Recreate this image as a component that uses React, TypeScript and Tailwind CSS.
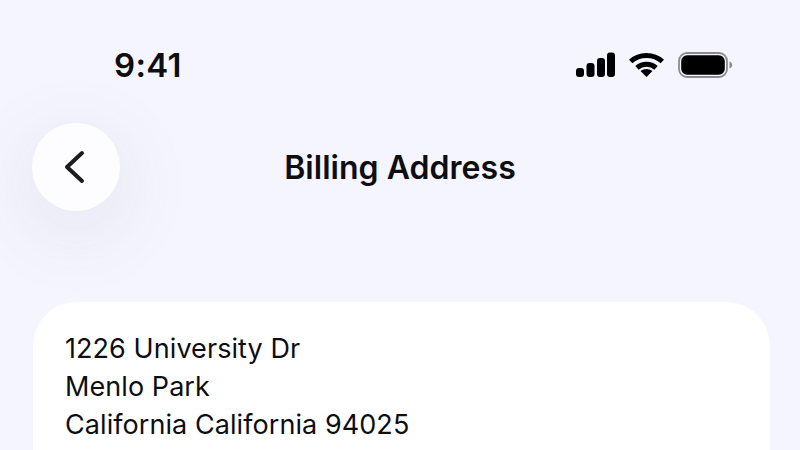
export default function App() {
  return (
    <div className="h-[450px] w-[800px] overflow-hidden bg-[#f5f5ff] font-['Inter',sans-serif] text-[#0e0e12]">
      {/* Status bar */}
      <div className="flex h-[123px] items-start justify-between pl-[114px] pr-[67px] pt-[45px]">
        <span className="text-[33px] leading-[40px] font-semibold tracking-[0.3px]">9:41</span>
        <div className="mt-[7px] flex items-center gap-[14px]">
          <svg width="39" height="26" viewBox="0 0 39 26" fill="#000">
            <rect x="0" y="16" width="8" height="9" rx="3" />
            <rect x="10.5" y="11" width="8" height="14" rx="3" />
            <rect x="21" y="6" width="8" height="19" rx="3" />
            <rect x="31" y="0.5" width="8" height="24.5" rx="3" />
          </svg>
          <svg width="35" height="26" viewBox="0 0 35 26" fill="none" stroke="#000" strokeWidth="5">
            <path d="M1.7 9.5C10.5 1.5 24.5 1.5 33.3 9.5" />
            <path d="M8 15.8C13.5 11 21.5 11 27 15.8" />
            <path d="M17.5 25l-6-6c3.4-2.8 8.6-2.8 12 0z" fill="#000" stroke="none" />
          </svg>
          <svg width="55" height="26" viewBox="0 0 55 26" fill="none">
            <rect x="1" y="1" width="48" height="24" rx="8" stroke="#8c8c90" strokeWidth="1.8" />
            <rect x="3.2" y="3.2" width="43.6" height="19.6" rx="6" fill="#000" />
            <path d="M51.5 9.5c1.8.6 2.8 2 2.8 3.5s-1 2.9-2.8 3.5z" fill="#8c8c90" />
          </svg>
        </div>
      </div>

      {/* Header */}
      <div className="relative flex h-[88px] items-center justify-center">
        <button className="absolute left-[32px] top-0 flex h-[88px] w-[88px] items-center justify-center rounded-full bg-[#fdfdff] shadow-[0_18px_60px_24px_rgba(70,70,90,0.05)]">
          <svg width="24" height="36" viewBox="0 0 24 36" fill="none" stroke="#1b1b20" strokeWidth="4" strokeLinecap="round" strokeLinejoin="round" className="-ml-[5px]">
            <path d="M20 4L5 18l15 14" />
          </svg>
        </button>
        <h1 className="mt-[2px] text-[32px] leading-[40px] font-semibold tracking-[0.03px]">Billing Address</h1>
      </div>

      {/* Address card */}
      <div className="ml-[33px] mr-[30px] mt-[91px] h-[300px] rounded-[44px] bg-white px-[32px] pt-[28px] text-[27px] leading-[38px] tracking-[0.07px]">
        <p>1226 University Dr</p>
        <p>Menlo Park</p>
        <p>California California 94025</p>
      </div>
    </div>
  );
}
